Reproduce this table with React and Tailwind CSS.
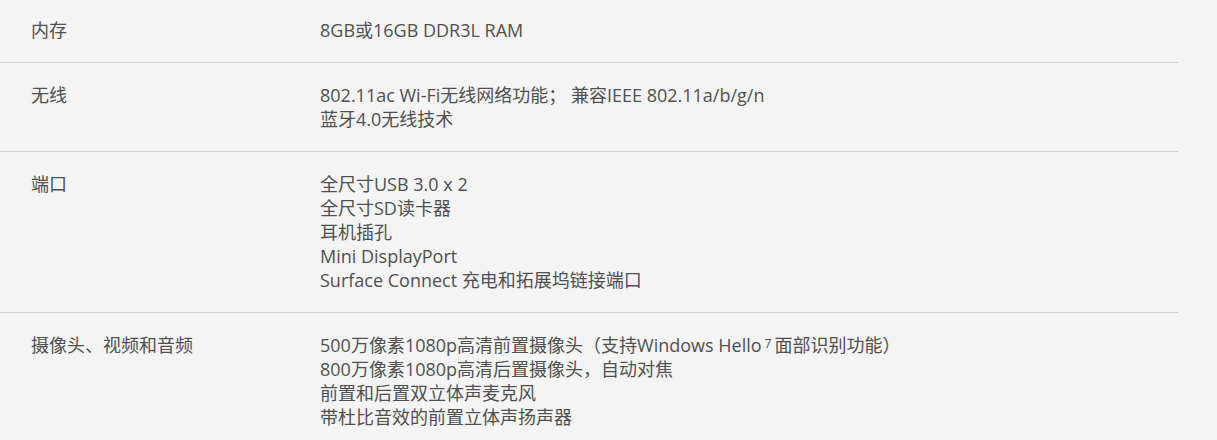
import React from 'react';

const SPECS = [
  { label: '内存', lines: ['8GB或16GB DDR3L RAM'] },
  { label: '无线', lines: ['802.11ac Wi-Fi无线网络功能； 兼容IEEE 802.11a/b/g/n', '蓝牙4.0无线技术'] },
  {
    label: '端口',
    lines: ['全尺寸USB 3.0 x 2', '全尺寸SD读卡器', '耳机插孔', 'Mini DisplayPort', 'Surface Connect 充电和拓展坞链接端口'],
  },
  {
    label: '摄像头、视频和音频',
    lines: [
      <>500万像素1080p高清前置摄像头（支持Windows Hello<sup className="text-[12px] relative -top-[4px] ml-[3px] mr-[3px]">7</sup>面部识别功能）</>,
      '800万像素1080p高清后置摄像头，自动对焦',
      '前置和后置双立体声麦克风',
      '带杜比音效的前置立体声扬声器',
    ],
  },
];

export default function App() {
  return (
    <div
      className="w-[1217px] h-[440px] overflow-hidden bg-[#f4f4f4] text-[#505050] text-[18px] leading-[24px]"
      style={{ fontFamily: '"Open Sans", "Noto Sans CJK SC", sans-serif' }}
    >
      <div className="w-[1178px]">
        {SPECS.map((s, i) => (
          <div
            key={s.label}
            className={`flex border-b border-[#cfcfcf] pb-[20px] ${i === 0 ? 'pt-[18px]' : 'pt-[20px]'}`}
          >
            <div className="w-[320px] pl-[31px] shrink-0">{s.label}</div>
            <div className="flex flex-col">
              {s.lines.map((l, j) => (
                <div key={j}>{l}</div>
              ))}
            </div>
          </div>
        ))}
      </div>
    </div>
  );
}
